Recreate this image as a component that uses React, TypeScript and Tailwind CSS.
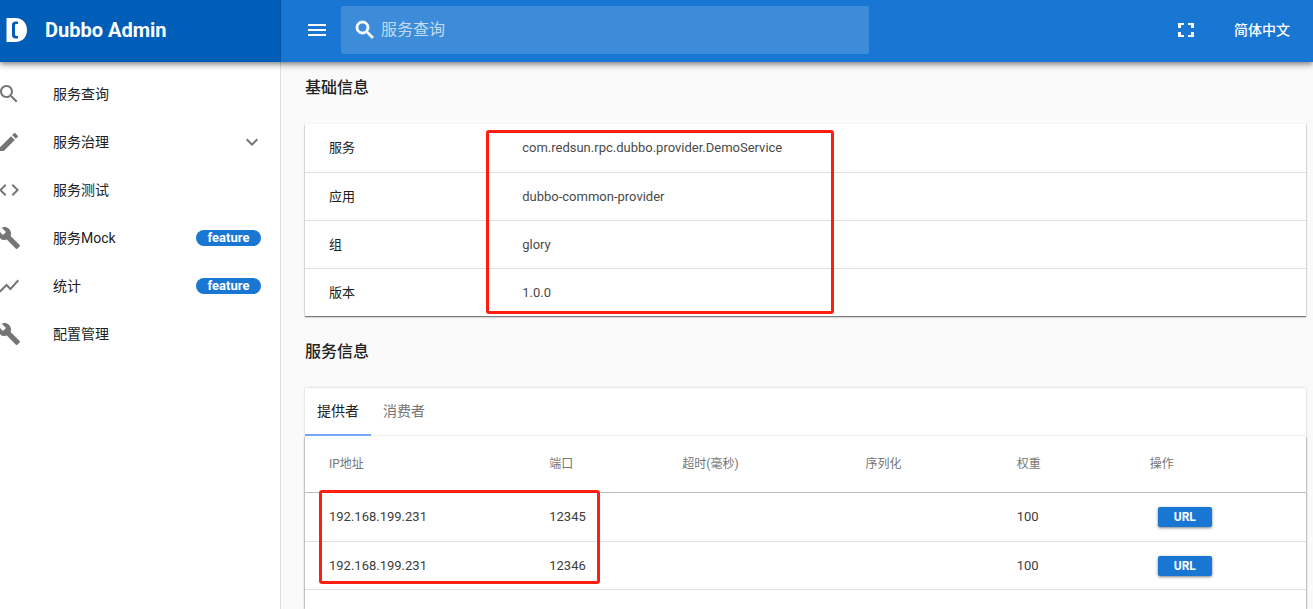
import { useState } from 'react';
import type { ReactNode } from 'react';

const ICONS = {
  search:
    'M15.5 14h-.79l-.28-.27C15.41 12.59 16 11.11 16 9.5 16 5.91 13.09 3 9.5 3S3 5.91 3 9.5 5.91 16 9.5 16c1.61 0 3.09-.59 4.23-1.57l.27.28v.79l5 4.99L20.49 19l-4.99-5zm-6 0C7.01 14 5 11.99 5 9.5S7.01 5 9.5 5 14 7.01 14 9.5 11.99 14 9.5 14z',
  edit: 'M3 17.25V21h3.75L17.81 9.94l-3.75-3.75L3 17.25zM20.71 7.04c.39-.39.39-1.02 0-1.41l-2.34-2.34c-.39-.39-1.02-.39-1.41 0l-1.83 1.83 3.75 3.75 1.83-1.83z',
  code: 'M9.4 16.6L4.8 12l4.6-4.6L8 6l-6 6 6 6 1.4-1.4zm5.2 0l4.6-4.6-4.6-4.6L16 6l6 6-6 6-1.4-1.4z',
  build:
    'M22.7 19l-9.1-9.1c.9-2.3.4-5-1.5-6.9-2-2-5-2.4-7.4-1.3L9 6 6 9 1.6 4.7C.4 7.1.9 10.1 2.9 12.1c1.9 1.9 4.6 2.4 6.9 1.5l9.1 9.1c.4.4 1 .4 1.4 0l2.3-2.3c.5-.4.5-1.1.1-1.4z',
  chart: 'M3.5 18.49l6-6.01 4 4L22 6.92l-1.41-1.41-7.09 7.97-4-4L2 16.99z',
  down: 'M7.41 8.59L12 13.17l4.59-4.58L18 10l-6 6-6-6 1.41-1.41z',
  menu: 'M3 18h18v-2H3v2zm0-5h18v-2H3v2zm0-7v2h18V6H3z',
  fullscreen:
    'M7 14H4v5h6v-2H7v-3zm-3-4h3V7h3V5H4v5zm13 7h-3v2h6v-5h-3v3zM14 5v2h3v3h3V5h-6z',
};

type IconName = keyof typeof ICONS;

function Icon({ name, className = 'size-6', bold = false }: { name: IconName; className?: string; bold?: boolean }) {
  return (
    <svg
      viewBox="0 0 24 24"
      className={`shrink-0 ${className}`}
      fill="currentColor"
      stroke={bold ? 'currentColor' : 'none'}
      strokeWidth={bold ? 0.8 : 0}
      aria-hidden="true"
    >
      <path d={ICONS[name]} />
    </svg>
  );
}

function Logo() {
  return (
    <svg viewBox="0 0 21 24" className="h-6 w-[21px] shrink-0" aria-hidden="true">
      <path
        fillRule="evenodd"
        fill="#fff"
        d="M.5 0H9.500C16.500 0 21 5 21 12s-4.500 12-11.500 12H.5V0zM12 3.500H9.500C7 3.500 6 4.800 6 7v10c0 2.200 1 3.500 3.500 3.500H12V18h-1.500c-1 0-1.500-.4-1.500-1.400V7.400C9 6.400 9.500 6 10.500 6H12V3.500z"
      />
    </svg>
  );
}

const NAV: { icon: IconName; label: string; badge?: string; group?: boolean }[] = [
  { icon: 'search', label: '服务查询' },
  { icon: 'edit', label: '服务治理', group: true },
  { icon: 'code', label: '服务测试' },
  { icon: 'build', label: '服务Mock', badge: 'feature' },
  { icon: 'chart', label: '统计', badge: 'feature' },
  { icon: 'build', label: '配置管理' },
];

const BASIC = [
  ['服务', 'com.redsun.rpc.dubbo.provider.DemoService'],
  ['应用', 'dubbo-common-provider'],
  ['组', 'glory'],
  ['版本', '1.0.0'],
];

const COLUMNS = [
  { label: 'IP地址', width: 'w-[22%]' },
  { label: '端口', width: 'w-[13.3%]' },
  { label: '超时(毫秒)', width: 'w-[18.3%]' },
  { label: '序列化', width: 'w-[15.1%]' },
  { label: '权重', width: 'w-[13.3%]' },
  { label: '操作', width: 'w-[18%]' },
];

const PROVIDERS = [
  { ip: '192.168.199.231', port: '12345', timeout: '', serial: '', weight: '100' },
  { ip: '192.168.199.231', port: '12346', timeout: '', serial: '', weight: '100' },
];

function Highlight({ className }: { className: string }) {
  return <div className={`pointer-events-none absolute rounded-[3px] border-3 border-[#ff1e10] ${className}`} />;
}

function Heading({ children }: { children: ReactNode }) {
  return <h3 className="pb-[26px] text-base leading-5 font-medium">{children}</h3>;
}

function Header() {
  return (
    <header className="relative z-10 flex h-[62px] shrink-0 bg-[#1976d2] text-white shadow-[0_2px_4px_-1px_rgba(0,0,0,0.3),0_4px_5px_0_rgba(0,0,0,0.18),0_1px_10px_0_rgba(0,0,0,0.14)]">
      <div className="flex w-[281px] shrink-0 items-center gap-[18px] border-r border-[#0454a4] bg-[#005eb8] pb-0.5 pl-1.5">
        <Logo />
        <span className="text-xl font-bold">Dubbo Admin</span>
      </div>
      <div className="flex min-w-0 flex-1 items-center pr-[9px] pb-0.5 pl-6">
        <button type="button" aria-label="Menu" className="mr-3">
          <Icon name="menu" />
        </button>
        <label className="flex h-12 w-[528px] items-center gap-1 rounded-xs bg-white/16 px-3">
          <Icon name="search" bold />
          <input
            type="text"
            aria-label="服务查询"
            placeholder="服务查询"
            className="min-w-0 flex-1 bg-transparent text-base outline-none placeholder:text-white/70"
          />
        </label>
        <button type="button" aria-label="Fullscreen" className="mr-[22px] ml-auto">
          <Icon name="fullscreen" />
        </button>
        <button type="button" className="px-3.5 text-sm font-medium">
          简体中文
        </button>
      </div>
    </header>
  );
}

function Sidebar() {
  return (
    <nav className="w-[281px] shrink-0 border-r border-[#dedede] bg-white pt-2">
      <ul>
        {NAV.map((item) => (
          <li key={item.label}>
            <a href="#" className="flex h-12 items-center pr-4">
              <Icon name={item.icon} className="-ml-[3px] size-6 text-[#757575]" />
              <span className="ml-8 flex-1 text-sm">{item.label}</span>
              {item.badge && (
                <span className="mr-[3px] h-4 w-[65px] rounded-full bg-[#1976d2] text-center text-[13px] leading-4 font-bold text-white">
                  {item.badge}
                </span>
              )}
              {item.group && <Icon name="down" className="size-6 text-[#757575]" />}
            </a>
          </li>
        ))}
      </ul>
    </nav>
  );
}

function BasicInfo() {
  return (
    <div className="relative mb-[26px] bg-white shadow-[0_1px_1px_0_rgba(0,0,0,0.4),0_1px_2px_0_rgba(0,0,0,0.25)]">
      <table className="w-full table-fixed border-separate border-spacing-0 text-left text-[13px]">
        <tbody>
          {BASIC.map(([name, value], i) => (
            <tr key={name}>
              <th
                scope="row"
                className={`h-12 w-[19.3%] px-6 font-normal ${i > 0 ? 'border-t border-[#e0e0e0]' : ''}`}
              >
                {name}
              </th>
              <td className={`px-6 text-[#4a4a4a] ${i > 0 ? 'border-t border-[#e0e0e0]' : ''}`}>{value}</td>
            </tr>
          ))}
        </tbody>
      </table>
      <Highlight className="top-1.5 left-[181px] h-[184px] w-[348px]" />
    </div>
  );
}

function ServiceInfo() {
  const [tab, setTab] = useState('提供者');
  const rows = tab === '提供者' ? PROVIDERS : [];
  return (
    <div className="flex flex-1 flex-col bg-white shadow-[0_0_2px_0_rgba(0,0,0,0.22)]">
      <div role="tablist" className="flex h-12 border-b border-[#f0f0f0]">
        {['提供者', '消费者'].map((name) => (
          <button
            key={name}
            type="button"
            role="tab"
            aria-selected={tab === name}
            onClick={() => setTab(name)}
            className={`-mb-px border-b-2 px-3 text-sm ${
              tab === name ? 'border-[#75a7f8] text-[#212121]' : 'border-transparent text-[#757575]'
            }`}
          >
            {name}
          </button>
        ))}
      </div>
      <div className="relative flex-1 shadow-[0_1px_2px_0_rgba(0,0,0,0.5)] [clip-path:inset(0_-4px)]">
        <table className="w-full table-fixed border-separate border-spacing-0 text-left">
          <thead>
            <tr>
              {COLUMNS.map((c) => (
                <th key={c.label} className={`h-14 px-6 text-xs font-normal text-[#757575] ${c.width}`}>
                  {c.label}
                </th>
              ))}
            </tr>
          </thead>
          <tbody className="text-[13px] text-[#3c3c3c] [&>tr:first-child>td]:border-[#bdbdbd] [&>tr:last-child>td]:border-b [&_td]:h-[49px] [&_td]:border-t [&_td]:border-[#e0e0e0] [&_td]:px-6">
            {rows.map((r) => (
              <tr key={r.port}>
                <td>{r.ip}</td>
                <td>{r.port}</td>
                <td>{r.timeout}</td>
                <td>{r.serial}</td>
                <td>{r.weight}</td>
                <td>
                  <button
                    type="button"
                    className="ml-2 block h-5 w-[54px] rounded-xs bg-[#1976d2] text-xs leading-5 font-bold text-white shadow-[0_1px_3px_0_rgba(0,0,0,0.5)]"
                  >
                    URL
                  </button>
                </td>
              </tr>
            ))}
          </tbody>
        </table>
        <Highlight className="top-[54px] left-3.5 h-[94px] w-[281px]" />
      </div>
    </div>
  );
}

export default function App() {
  return (
    <div className="flex h-screen flex-col overflow-hidden bg-[#fafafa] font-['Roboto','Noto_Sans_CJK_SC',sans-serif] text-[#212121]">
      <Header />
      <div className="flex min-h-0 flex-1">
        <Sidebar />
        <main className="flex min-w-0 flex-1 flex-col pt-4 pr-[7px] pl-6">
          <Heading>基础信息</Heading>
          <BasicInfo />
          <Heading>服务信息</Heading>
          <ServiceInfo />
        </main>
      </div>
    </div>
  );
}
